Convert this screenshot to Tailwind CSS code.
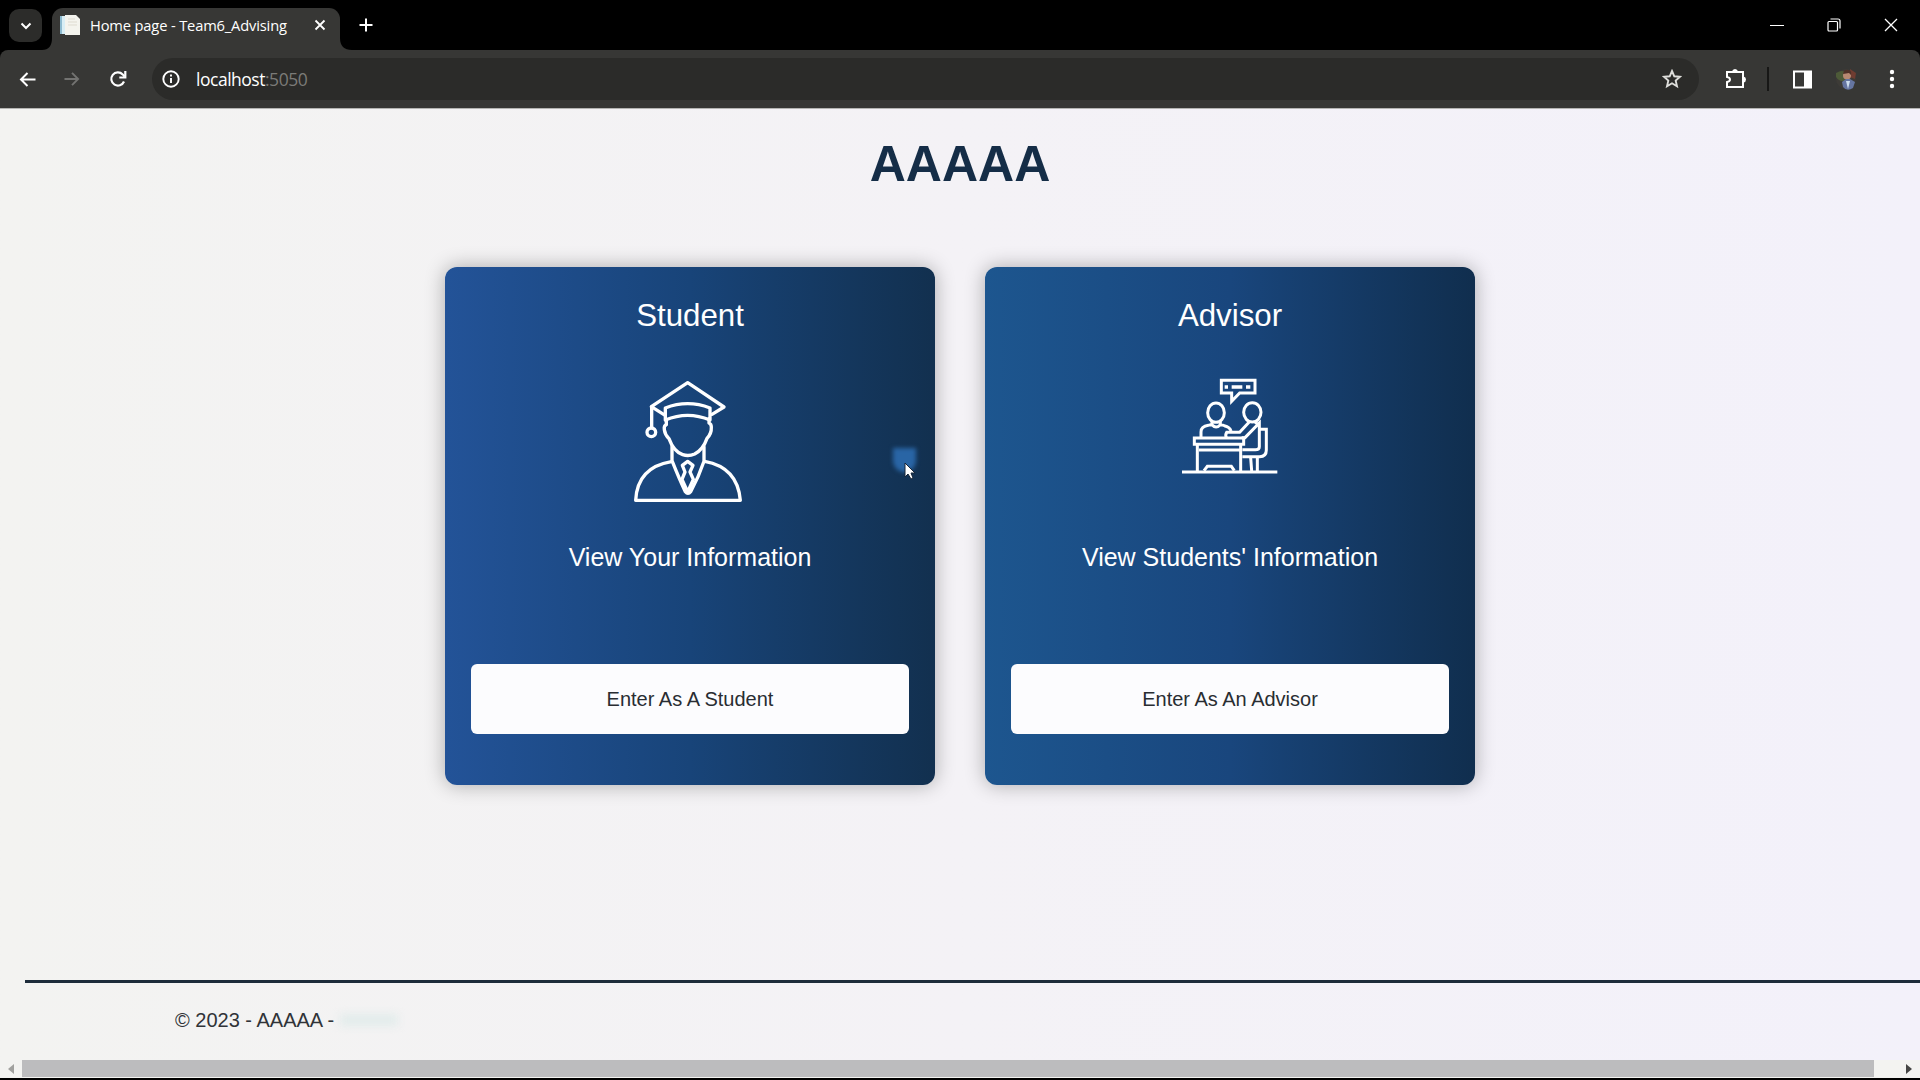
<!DOCTYPE html>
<html lang="en">
<head>
<meta charset="utf-8">
<title>Home page - Team6_Advising</title>
<script src="https://cdn.jsdelivr.net/npm/@tailwindcss/browser@4"></script>
</head>
<body class="relative flex h-[1080px] w-[1920px] flex-col overflow-hidden bg-black font-['Liberation_Sans',Arial,sans-serif]">
  <!-- Tab strip -->
  <header class="flex h-[50px] shrink-0 items-end bg-black text-white">
    <div class="mb-[8px] ml-[9px] flex size-[33px] items-center justify-center rounded-[10px] bg-[#2c2c2a]">
      <svg class="size-3" viewBox="0 0 12 12" fill="none" stroke="currentColor" stroke-width="2"><path d="M1.500 3.500 6 8l4.500-4.500"/></svg>
    </div>
    <svg class="h-[12px] w-[10px] text-[#373735]" viewBox="0 0 11 12" preserveAspectRatio="none" fill="currentColor"><path d="M11 0v12H0Q11 12 11 0z"/></svg>
    <div class="flex h-[42px] w-[288px] items-center rounded-t-[11px] bg-[#373735] pt-[1px] pb-[10px] pl-2">
      <svg class="h-[20px] w-[21px]" viewBox="0 0 21 20"><path d="M0 1h6v18H0z" fill="#8dbbd0"/><path d="M2 1h3v18H2z" fill="#d8eef5"/><path d="M5 0h11l4 4v16H5z" fill="#f4f4ee"/><path d="M8 4h7M8 7h9M8 10h9" stroke="#dedbd0"/></svg>
      <span class="ml-[9px] w-[198px] whitespace-nowrap font-['Open_Sans','Noto_Sans',sans-serif] text-[14.700px] leading-5 tracking-[-0.160px]">Home page - Team6_Advising</span>
      <svg class="ml-[26px] size-[12px]" viewBox="0 0 12 12" stroke="currentColor" stroke-width="1.800"><path d="m1.500 1.500 9 9m0-9-9 9"/></svg>
    </div>
    <svg class="h-[12px] w-[12px] text-[#373735]" viewBox="0 0 12 12" fill="currentColor"><path d="M0 0v12h12Q0 12 0 0z"/></svg>
    <svg class="mb-[18px] ml-[7px] size-[14px]" viewBox="0 0 14 14" stroke="currentColor" stroke-width="2"><path d="M7 .5v13M.5 7h13"/></svg>
    <div class="mr-[22px] mb-[18px] ml-auto flex items-center gap-[43px]">
      <svg class="size-[14px]" viewBox="0 0 14 14" stroke="currentColor"><path d="M0 7.500h14"/></svg>
      <svg class="size-[14px]" viewBox="0 0 14 14" fill="none" stroke="currentColor" stroke-width="1.200"><rect x="1" y="3.500" width="9.500" height="9.500" rx="1"/><path d="M3.500 1H11q2 0 2 2v7.500"/></svg>
      <svg class="size-[14px]" viewBox="0 0 14 14" stroke="currentColor" stroke-width="1.300"><path d="m1 1 12 12m0-12L1 13"/></svg>
    </div>
  </header>

  <!-- Toolbar -->
  <nav class="flex h-[58px] shrink-0 items-center rounded-t-lg bg-[#373735] text-white">
    <svg class="ml-[19px] size-[17px]" viewBox="0 0 17 17" fill="none" stroke="currentColor" stroke-width="2"><path d="M16.500 8.500H2M8.500 2 2 8.500 8.500 15"/></svg>
    <svg class="ml-[28px] size-[16px] text-[#737371]" viewBox="0 0 17 17" fill="none" stroke="currentColor" stroke-width="2"><path d="M.5 8.500H15M8.500 2 15 8.500 8.500 15"/></svg>
    <svg class="ml-[29px] size-[18px]" viewBox="0 0 18 18" fill="none" stroke="currentColor" stroke-width="2.200"><path d="M15 11.500A6.600 6.600 0 1 1 13.700 4.400L15.500 6.500"/><path d="M16.300 1v6.500h-6"/></svg>
    <div class="ml-[25px] flex h-[42px] w-[1547px] items-center rounded-full bg-[#2b2b29] pl-[10px]">
      <svg class="size-[18px]" viewBox="0 0 18 18" fill="none" stroke="currentColor" stroke-width="1.900"><circle cx="9" cy="9" r="7.700"/><path d="M9 8v5M9 4.500v2"/></svg>
      <span class="ml-[16px] whitespace-nowrap font-['Open_Sans','Noto_Sans',sans-serif] text-[17.500px] leading-6 tracking-[-0.480px]">localhost<span class="text-[#7b7b78]">:5050</span></span>
      <svg class="mr-[17px] ml-auto size-[20px]" viewBox="0 0 20 20" fill="none" stroke="#dededb" stroke-width="1.900"><path d="m10 2 2.300 5.300 5.700.5-4.300 3.800 1.300 5.700-5-3-5 3 1.300-5.700L2 7.800l5.700-.5z"/></svg>
    </div>
    <svg class="ml-[26px] size-[22px]" viewBox="0 0 22 22"><path d="M2 4h16v15H2v-5q3-.5 3-2.500T2 9z" fill="none" stroke="white" stroke-width="2"/><path d="M7 3.500q.5-2.500 3-2.500t3 2.500zM18.500 8.500q2.500.5 2.500 3t-2.500 3z" fill="white"/></svg>
    <div class="ml-[20px] h-6 w-[2px] bg-[#171716]"></div>
    <svg class="ml-[24px] size-[19px]" viewBox="0 0 19 19"><path d="M1 1.500h17v16H1z" fill="none" stroke="white" stroke-width="2"/><path d="M11 1h7v17h-7z" fill="white"/></svg>
    <svg class="ml-[22px] size-[24px]" viewBox="0 0 24 24"><circle cx="12" cy="12" r="10" fill="#3d3b37"/><path d="M2 6q7-4 10 0l-1 8q-6 1-9-4z" fill="#4d5a38"/><path d="m16 2 6 4-1 6-5-2z" fill="#703c31"/><circle cx="13" cy="8.500" r="4" fill="#b88972"/><path d="M9 7q1-5 5-4 4 0 3 5l-2-2z" fill="#4e3128"/><path d="m8 15 4-3h4l5 3-2 6q-6 4-10-1z" fill="#6575a1"/><path d="m12 14 2 8 2-8z" fill="#cbdced"/></svg>
    <svg class="ml-[31px] h-[20px] w-[6px]" viewBox="0 0 6 20" fill="white"><circle cx="3" cy="3" r="2.200"/><circle cx="3" cy="10" r="2.200"/><circle cx="3" cy="17" r="2.200"/></svg>
  </nav>

  <!-- Page -->
  <div class="flex h-[952px] flex-col border-t border-[#b5b5b3] bg-linear-to-r from-[#f3f3f1] via-[#f4f2f6] to-[#f3f1fa]">
    <h1 class="pt-[25px] text-center text-[50px] leading-[60px] font-bold text-[#152d47]">AAAAA</h1>

    <main class="mt-[73px] flex justify-center gap-[50px] text-center text-white">
      <section class="flex h-[518px] w-[490px] flex-col items-center rounded-[12px] bg-linear-to-r from-[#235398] via-[#184479] to-[#12304f] pt-[30px] shadow-[0_0_20px_rgba(0,0,0,0.300)]">
        <h2 class="text-[31.250px] leading-[38px]">Student</h2>
        <svg class="mt-[15px] mr-[1px] h-[170px] w-[180px]" viewBox="0 0 540 510" fill="none" stroke="white" stroke-width="10" stroke-linejoin="round" stroke-linecap="round">
          <path d="M192 194 154 170 263 98l109 73-36 22"/>
          <path d="M155 171v62"/><circle cx="154" cy="247" r="13"/>
          <path d="M196 174q67-26 134 0v36q-67-28-134 0z"/>
          <path d="M199 209v15q-8 3-6 15 2 15 14 27 14 39 41 48 18 6 36-2 25-13 37-47 14-14 13-34 0-9-7-12v-13"/>
          <path d="M216 288v44q23 58 40 93 8 10 16 0 24-43 40-91v-44"/>
          <path d="M214 335q-102 17-107 116h314q-8-99-107-117"/>
          <path d="m263 334-16 12 8 20-9 22 17 38 17-38-10-22 9-20z"/>
        </svg>
        <p class="mt-[22px] text-[25px] leading-[30px]">View Your Information</p>
        <button class="mt-[92px] h-[70px] w-[438px] rounded-[6px] bg-[#fcfcfe] text-[20px] leading-6 text-[#292d32]">Enter As A Student</button>
      </section>

      <section class="flex h-[518px] w-[490px] flex-col items-center rounded-[12px] bg-linear-to-r from-[#1d568f] via-[#19467d] to-[#102e4e] pt-[30px] shadow-[0_0_20px_rgba(0,0,0,0.300)]">
        <h2 class="text-[31.250px] leading-[38px]">Advisor</h2>
        <svg class="mt-[25px] h-[130px] w-[140px]" viewBox="0 0 420 390" fill="none" stroke="white" stroke-width="9" stroke-linejoin="miter">
          <path d="M184 61h101v38h-46l-24 25V99h-31z"/><path d="M194 81h10m11 0h32m11 0h13" stroke-width="10"/>
          <ellipse cx="168" cy="158" rx="25" ry="29"/><ellipse cx="277" cy="157" rx="26" ry="29"/>
          <path d="M156 184v10q12 14 25 0v-10M123 232v-16q0-17 22-20l10-3m26 0 12 4q17 4 20 16"/>
          <path d="M267 187 239 217h-39q-5 8-1 16m46 0h10l43-44v71q0 9-12 9h-39M284 185l16 14"/>
          <path d="M298 208h21v62q0 20-20 20h-52"/>
          <path d="M103 234h148v19H103zM112 257v76m130-76v76M117 270h122"/>
          <path d="m132 332 10-13h72l9 13M272 293l3 40m17-41v42"/>
          <path d="M66 336h286"/>
        </svg>
        <p class="mt-[52px] text-[25px] leading-[30px]">View Students' Information</p>
        <button class="mt-[92px] h-[70px] w-[438px] rounded-[6px] bg-[#fcfcfe] text-[20px] leading-6 text-[#292d32]">Enter As An Advisor</button>
      </section>
    </main>

    <footer class="mt-auto ml-[25px] h-[80px] border-t-[3px] border-[#1d2c3a] pt-[25px] pl-[150px] text-[20px] leading-6 text-[#303338]">
      <p class="flex items-center">© 2023 - AAAAA -<span class="ml-[6px] h-3 w-[58px] bg-[#dce9e8]/70 blur-[4px]"></span></p>
    </footer>
  </div>

  <!-- Horizontal scrollbar -->
  <div class="flex h-[18px] shrink-0 items-center bg-[#f3f3f1]">
    <svg class="mr-2 ml-2 h-[10px] w-[6px]" viewBox="0 0 6 10" fill="#a1a19f"><path d="M6 0v10L0 5z"/></svg>
    <div class="mb-[1px] h-[17px] w-[1852px] bg-[#bcbcbe]"></div>
    <svg class="mr-2 ml-auto h-[10px] w-[6px]" viewBox="0 0 6 10" fill="#454545"><path d="M0 0v10l6-5z"/></svg>
  </div>

  <!-- Pointer with its highlight -->
  <div class="absolute top-[448px] left-[893px] h-[24px] w-[23px] rounded-b-full bg-[#2965a5] blur-[2px]"></div>
  <svg class="absolute top-[462px] left-[904px] h-[18px] w-[12px]" viewBox="0 0 12 18"><path d="M1 1v14l3-3 3 5 2-1-2-5h4z" fill="white" stroke="#182638"/></svg>
</body>
</html>
